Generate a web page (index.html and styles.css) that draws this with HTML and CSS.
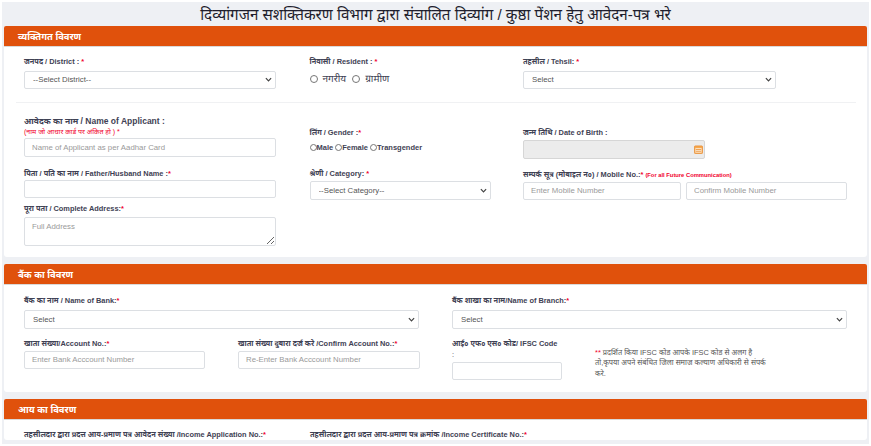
FILE: index.html
```html
<!DOCTYPE html>
<html lang="hi">
<head>
  <meta charset="UTF-8" />
  <meta name="viewport" content="width=device-width, initial-scale=1" />
  <title>दिव्यांग / कुष्ठा पेंशन आवेदन</title>
  <link rel="stylesheet" href="styles.css">
</head>
<body>

<div class="page">
  <h1 class="page-title">दिव्यांगजन सशक्तिकरण विभाग द्वारा संचालित दिव्यांग / कुष्ठा पेंशन हेतु आवेदन-पत्र भरे</h1>

  <section class="card card-personal">
    <h2 class="card-head">व्यक्तिगत विवरण</h2>
    <div class="card-body">
      <div class="row-three row-top">
        <div class="field">
          <label>जनपद / District : <span class="req">*</span></label>
          <select class="control control-wide"><option>--Select District--</option></select>
        </div>
        <div class="field">
          <label>निवासी / Resident : <span class="req">*</span></label>
          <div class="radios radios-big">
            <input type="radio" name="area"><span>नगरीय</span>
            <input type="radio" name="area"><span>ग्रामीण</span>
          </div>
        </div>
        <div class="field">
          <label>तहसील / Tehsil: <span class="req">*</span></label>
          <select class="control control-tehsil"><option>Select</option></select>
        </div>
      </div>
      <div class="divider"></div>
      <div class="row-three">
        <div class="stack">
          <div class="field field-name">
            <label class="label-big">आवेदक का नाम / Name of Applicant :</label>
            <div class="hint">(नाम जो आधार कार्ड पर अंकित हो ) <span class="req">*</span></div>
            <input class="control control-wide" placeholder="Name of Applicant as per Aadhar Card">
          </div>
          <div class="field field-father">
            <label>पिता / पति का नाम / Father/Husband Name :<span class="req">*</span></label>
            <input class="control control-wide">
          </div>
          <div class="field field-address">
            <label>पूरा पता / Complete Address:<span class="req">*</span></label>
            <textarea class="control control-wide control-area" placeholder="Full Address"></textarea>
          </div>
        </div>
        <div class="stack">
          <div class="field field-gender">
            <label>लिंग / Gender :<span class="req">*</span></label>
            <div class="radios radios-small">
              <input type="radio" name="gender"><span>Male</span>
              <input type="radio" name="gender"><span>Female</span>
              <input type="radio" name="gender"><span>Transgender</span>
            </div>
          </div>
          <div class="field field-category">
            <label>श्रेणी / Category: <span class="req">*</span></label>
            <select class="control control-category"><option>--Select Category--</option></select>
          </div>
        </div>
        <div class="stack">
          <div class="field field-dob">
            <label>जन्म तिथि / Date of Birth :</label>
            <div class="date-box">
              <svg class="date-icon" viewBox="0 0 10 10" width="9" height="9" aria-hidden="true">
                <rect x="0.5" y="1" width="9" height="8.5" rx="1" fill="#f7a94f" stroke="#e8872a" stroke-width="0.8"/>
                <rect x="1.5" y="3.5" width="7" height="5" fill="#fde9cf"/>
                <path d="M2 5h6M2 7h6" stroke="#e8872a" stroke-width="0.8"/>
              </svg>
            </div>
          </div>
          <div class="field field-mobile">
            <label>सम्पर्क सूत्र (मोबाइल न०) / Mobile No.:<span class="req">*</span> <span class="note-red">(For all Future Communication)</span></label>
            <div class="mobile-pair">
              <input class="control" placeholder="Enter Mobile Number">
              <input class="control" placeholder="Confirm Mobile Number">
            </div>
          </div>
        </div>
      </div>
    </div>
  </section>

  <section class="card card-bank">
    <h2 class="card-head">बैंक का विवरण</h2>
    <div class="card-body">
      <div class="row-two">
        <div class="field">
          <label>बैंक का नाम / Name of Bank:<span class="req">*</span></label>
          <select class="control control-bank"><option>Select</option></select>
        </div>
        <div class="field">
          <label>बैंक शाखा का नाम/Name of Branch:<span class="req">*</span></label>
          <select class="control control-bank"><option>Select</option></select>
        </div>
      </div>
      <div class="row-four">
        <div class="field">
          <label>खाता संख्या/Account No.:<span class="req">*</span></label>
          <input class="control control-account" placeholder="Enter Bank Acccount Number">
        </div>
        <div class="field">
          <label>खाता संख्या दुबारा दर्ज करे /Confirm Account No.:<span class="req">*</span></label>
          <input class="control control-confirm" placeholder="Re-Enter Bank Acccount Number">
        </div>
        <div class="field field-ifsc">
          <label>आई० एफ० एस० कोड/ IFSC Code <span class="colon">:</span></label>
          <input class="control control-ifsc">
        </div>
        <p class="ifsc-note"><span class="req">**</span> प्रदर्शित किया IFSC कोड आपके IFSC कोड से अलग है तो,कृपया अपने संबंधित जिला समाज कल्याण अधिकारी से संपर्क करे.</p>
      </div>
    </div>
  </section>

  <section class="card">
    <h2 class="card-head">आय का विवरण</h2>
    <div class="card-body">
      <div class="row-income">
        <label>तहसीलदार द्वारा प्रदत्त आय-प्रमाण पत्र आवेदन संख्या /Income Application No.:<span class="req">*</span></label>
        <label>तहसीलदार द्वारा प्रदत्त आय-प्रमाण पत्र क्रमांक /Income Certificate No.:<span class="req">*</span></label>
      </div>
    </div>
  </section>
</div>

</body>
</html>
```

FILE: styles.css
```css
* { box-sizing: border-box; }
html, body {
  margin: 0;
  padding: 0;
  background: #fff;
  font-family: "Liberation Sans", "Noto Sans Devanagari", "Noto Sans", sans-serif;
  color: #3f4254;
}
.page {
  margin: 2px 2px 0;
  height: 442px;
  overflow: hidden;
  padding: 0 2px;
  background: #eef0f4;
}
.page-title {
  margin: 0;
  height: 23.5px;
  line-height: 26px;
  font-size: 15.2px;
  font-weight: 400;
  text-align: center;
  color: #1e1e2d;
}
.card {
  background: #fff;
  border-radius: 3px;
  margin-bottom: 7px;
}
.card-personal { height: 231.5px; }
.card-bank { height: 128px; }
.card-head {
  margin: 0;
  height: 21px;
  padding-left: 14px;
  line-height: 21px;
  font-size: 9.4px;
  font-weight: 700;
  color: #fff;
  background: #e0510c;
  border-radius: 2px 2px 0 0;
  border-bottom: 1px solid #d9d9d9;
}
.card-body { padding: 0 20px; }
.card-personal .card-body { padding-top: 10px; }
.card-bank .card-body { padding-top: 11px; }

label {
  display: block;
  font-size: 7.4px;
  font-weight: 700;
  line-height: 10px;
  color: #3f4254;
  white-space: nowrap;
}
.req { color: #f1002c; }
.hint {
  font-size: 7px;
  line-height: 10px;
  color: #f1002c;
}
.note-red {
  font-size: 5.8px;
  color: #f1002c;
}
.label-big { font-size: 8.5px; }
.control {
  display: block;
  height: 18.5px;
  padding: 0 7px;
  border: 1px solid #dcdfe3;
  border-radius: 2px;
  background: #fff;
  font-family: inherit;
  font-size: 7.8px;
  color: #555;
  outline: none;
}
.control::placeholder { color: #9a9a9a; opacity: 1; }
select.control {
  appearance: none;
  padding: 0 8px;
  background: #fff url("data:image/svg+xml,%3Csvg xmlns='http://www.w3.org/2000/svg' viewBox='0 0 8 5'%3E%3Cpath d='M1 1l3 3 3-3' fill='none' stroke='%23444' stroke-width='1.4'/%3E%3C/svg%3E") no-repeat right 3px center / 7px 5px;
}
.control-wide { width: 252px; }
.control-tehsil { width: 253px; }
.control-category { width: 181px; }
.control-area { height: 29px; padding-top: 4px; }
.control-bank { width: 100%; }
.control-account { width: 181px; }
.control-confirm { width: 182px; }
.control-ifsc { width: 110px; }

.row-three {
  display: grid;
  grid-template-columns: 285.5px 213.5px 1fr;
}
.row-top .field label { margin-bottom: 4px; }
.divider {
  height: 1px;
  margin: 13px 0 12px -8px;
  width: 840px;
  background: #f0f1f3;
}
.stack {
  display: flex;
  flex-direction: column;
}
.field-name { margin-top: 1px; }
.field-name .hint { margin-top: 1px; margin-bottom: 1px; }
.field-father { margin-top: 12px; }
.field-father label { margin-bottom: 1px; }
.field-address { margin-top: 6px; }
.field-address label { margin-bottom: 3px; }
.field-gender { margin-top: 13px; }
.field-gender label { margin-bottom: 3px; }
.field-dob { margin-top: 13px; }
.field-dob label { margin-bottom: 2px; }
.field-category { margin-top: 17px; }
.field-category label { margin-bottom: 2px; }
.field-mobile { margin-top: 11px; }
.field-mobile label { margin-bottom: 2px; }

.radios {
  display: flex;
  align-items: center;
  font-weight: 700;
  color: #3f4254;
}
.radios input {
  margin: 0;
  flex: none;
  accent-color: #666;
}
.row-top .radios-big { margin-top: 6px; font-size: 10px; font-weight: 400; }
.radios-big input { width: 8px; height: 8px; margin-right: 5px; }
.radios-big span { margin-right: 6px; }
.radios-small { font-size: 7.5px; margin-top: 5px; }
.radios-small input { width: 7px; height: 7px; }
.radios-small span { margin-right: 2px; }

.date-box {
  position: relative;
  width: 182px;
  height: 18.5px;
  background: #ececec;
  border: 1px solid #d6d6d6;
  border-radius: 2px;
}
.date-icon {
  position: absolute;
  right: 1.5px;
  top: 4px;
}
.mobile-pair {
  display: grid;
  grid-template-columns: 158px 161px;
  gap: 5px;
}
.mobile-pair .control { width: 100%; }

.row-two {
  display: grid;
  grid-template-columns: 395px 395px;
  gap: 33px;
}
.row-two label { margin-bottom: 4px; }
.row-four {
  display: grid;
  grid-template-columns: 214px 214px 143px 180px;
  margin-top: 10px;
}
.row-four label { margin-bottom: 2px; }
.field-ifsc { margin-top: -1px; }
.row-four .field-ifsc label {
  white-space: normal;
  line-height: 11px;
}
.colon { display: block; font-weight: 400; }
.ifsc-note {
  margin: 9px 0 0;
  font-size: 7.4px;
  line-height: 10.5px;
  color: #555;
}
.row-income {
  display: grid;
  grid-template-columns: 286px 1fr;
  padding-top: 10px;
}
```
